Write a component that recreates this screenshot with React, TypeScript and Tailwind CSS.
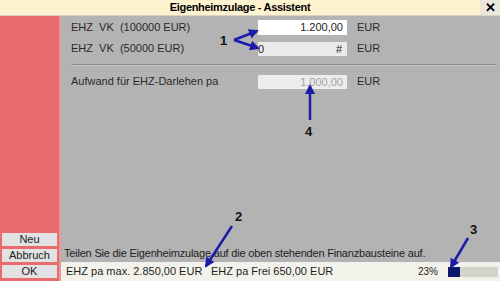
import React from 'react';

const font = { fontFamily: '"Liberation Sans", Arial, sans-serif' };

const Row: React.FC<{ label: string; children: React.ReactNode }> = ({ label, children }) => (
  <div className="flex items-center h-[21px]">
    <div className="w-[187px] whitespace-pre text-[11px] text-[#2a2a2a]">{label}</div>
    {children}
    <div className="ml-[10px] text-[11px] text-[#2a2a2a]">EUR</div>
  </div>
);

const App: React.FC = () => {
  return (
    <div className="relative w-[500px] h-[281px] overflow-hidden flex flex-col bg-[#b3b3b3]" style={font}>
      {/* Titelleiste */}
      <div className="h-[16px] flex items-center bg-[#fdf3d0] border-b border-[#d8d2bf]">
        <div className="flex-1 text-center text-[11px] font-bold text-black tracking-[-0.3px]">
          Eigenheimzulage - Assistent
        </div>
        <div className="w-[20px] h-full flex items-center justify-center bg-[#ebe7dc] text-[13px] font-bold leading-none">
          ✕
        </div>
      </div>

      <div className="flex flex-1 min-h-0">
        {/* Linke Leiste */}
        <div className="w-[61px] border-r-2 border-[#e39a9a] bg-[#e96b6b] flex flex-col justify-end items-center gap-[3px] pb-[3px]">
          {['Neu', 'Abbruch', 'OK'].map((b) => (
            <div
              key={b}
              className="w-[55px] h-[13px] bg-[#e2e1e4] text-[11px] leading-[13px] text-center text-[#222]"
            >
              {b}
            </div>
          ))}
        </div>

        {/* Hauptbereich */}
        <div className="flex-1 flex flex-col">
          <div className="pl-[10px] pr-[3px] pt-[1px]">
            <Row label="EHZ  VK  (100000 EUR)">
              <div className="w-[89px] h-[15px] bg-white text-[11px] leading-[15px] text-right pr-[4px] text-[#222]">
                1.200,00
              </div>
            </Row>
            <Row label="EHZ  VK  (50000 EUR)">
              <div className="w-[89px] h-[14px] bg-[#ebebeb] text-[11px] leading-[14px] flex justify-between pr-[5px] text-[#222]">
                <span>0</span>
                <span>#</span>
              </div>
            </Row>
            <div className="mt-[5px] mb-[5px] h-[2px] border-t border-[#8a8a8a] border-b border-b-[#c8c8c8]" />
            <Row label="Aufwand für EHZ-Darlehen pa">
              <div className="w-[89px] h-[14px] bg-[#ececec] text-[11px] leading-[14px] text-right pr-[4px] text-[#a3a3a3]">
                1.000,00
              </div>
            </Row>
          </div>

          <div className="flex-1" />

          <div className="pl-[3px] pb-[1px] text-[11px] text-[#1e1e1e] tracking-[-0.2px]">
            Teilen Sie die Eigenheimzulage auf die oben stehenden Finanzbausteine auf.
          </div>

          {/* Statusleiste */}
          <div className="h-[19px] bg-[#f3f2ea] flex items-center pl-[5px] pr-[2px] text-[11px] text-[#1e1e1e]">
            <span className="w-[145px]">EHZ pa max. 2.850,00 EUR</span>
            <span>EHZ pa Frei 650,00 EUR</span>
            <span className="ml-auto mr-[10px] text-[10px]">23%</span>
            <div className="w-[50px] h-[10px] bg-[#d4d3cb] flex">
              <div className="w-[12px] h-full bg-[#0b176b]" />
            </div>
          </div>
        </div>
      </div>

      {/* Markierungen */}
      <svg className="absolute inset-0 pointer-events-none" width="500" height="281" viewBox="0 0 500 281">
        <defs>
          <marker id="ah" viewBox="0 0 10 10" refX="8" refY="5" markerWidth="4" markerHeight="4" orient="auto-start-reverse">
            <path d="M0 0 L10 5 L0 10 z" fill="#1c1ca8" />
          </marker>
        </defs>
        <g stroke="#1c1ca8" strokeWidth="2.5" fill="none" markerEnd="url(#ah)">
          <line x1="234" y1="40" x2="257" y2="31" />
          <line x1="234" y1="40" x2="258" y2="48" />
          <line x1="310" y1="120" x2="310" y2="86" />
          <line x1="232" y1="226" x2="206" y2="266" />
          <line x1="468" y1="238" x2="451" y2="267" />
        </g>
        <g fontFamily='"Liberation Sans", Arial, sans-serif' fontWeight="bold" fontSize="13" fill="#111">
          <text x="220" y="45">1</text>
          <text x="305" y="136">4</text>
          <text x="235" y="221">2</text>
          <text x="470" y="234">3</text>
        </g>
      </svg>
    </div>
  );
};

export default App;
